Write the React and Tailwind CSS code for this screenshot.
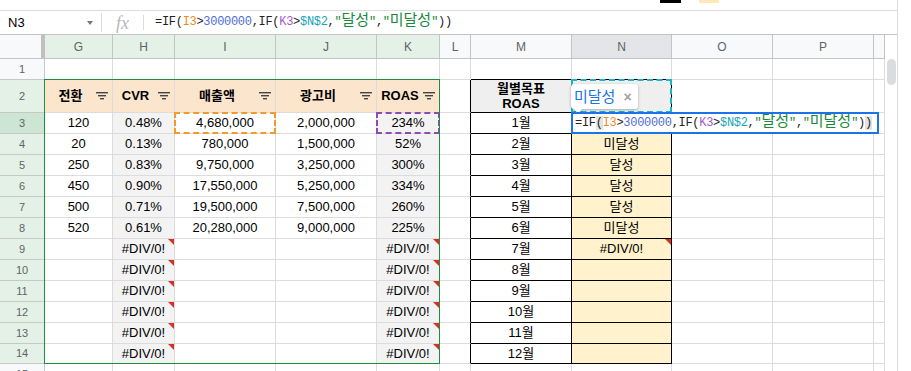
import React from "react";

const W = ["w-[45px]", "w-[68px]", "w-[62px]", "w-[101px]", "w-[101px]", "w-[63px]", "w-[31px]", "w-[101px]", "w-[100px]", "w-[101px]", "w-[101px]", "w-[11px]"];
const LETTERS = ["", "G", "H", "I", "J", "K", "L", "M", "N", "O", "P", ""];

const leftData = {
  3: ["120", "0.48%", "4,680,000", "2,000,000", "234%"],
  4: ["20", "0.13%", "780,000", "1,500,000", "52%"],
  5: ["250", "0.83%", "9,750,000", "3,250,000", "300%"],
  6: ["450", "0.90%", "17,550,000", "5,250,000", "334%"],
  7: ["500", "0.71%", "19,500,000", "7,500,000", "260%"],
  8: ["520", "0.61%", "20,280,000", "9,000,000", "225%"],
};

const nData = { 4: "미달성", 5: "달성", 6: "달성", 7: "달성", 8: "미달성", 9: "#DIV/0!" };

const GREEN = "text-[#188a3a]";

function Formula({ hl }) {
  const ko = "text-[15px] tracking-normal";
  const paren = hl ? "bg-[#e3e3e3]" : "";
  return (
    <span className="font-['Liberation_Mono','Noto_Sans_CJK_KR',monospace] text-[12px] tracking-[-0.3px] text-[#222] whitespace-nowrap">
      =IF<span className={paren}>(</span>
      <span className="text-[#f08a24]">I3</span>&gt;
      <span className="text-[#4f6bd6]">3000000</span>,IF(
      <span className="text-[#a35bc7]">K3</span>&gt;
      <span className="text-[#18a6b8]">$N$2</span>,
      <span className={GREEN}>"<span className={ko}>달성</span>"</span>,
      <span className={GREEN}>"<span className={ko}>미달성</span>"</span>)
      <span className={paren}>)</span>
    </span>
  );
}

function FilterIcon() {
  return (
    <svg width="12" height="8" viewBox="0 0 12 8" className="mr-[4px] shrink-0">
      <rect x="0" y="0" width="12" height="1.4" fill="#444" />
      <rect x="2" y="3" width="8" height="1.4" fill="#444" />
      <rect x="4" y="6" width="4" height="1.4" fill="#444" />
    </svg>
  );
}

function ErrMark() {
  return <span className="absolute top-0 right-0 w-0 h-0 border-l-[6px] border-l-transparent border-t-[6px] border-t-[#d93025]" />;
}

function rowHeight(r) {
  if (r === 2) return "h-[33px]";
  if (r === 14) return "h-[20px]";
  return "h-[21px]";
}

function Row({ r }) {
  const h = rowHeight(r);
  const inLeft = r >= 2 && r <= 14;
  const headBg = r === 3 ? "bg-[#cde5d3]" : inLeft ? "bg-[#e4f1e7]" : "bg-[#f8f9fa]";
  const cells = [];

  cells.push(
    <div key="rh" className={`${W[0]} ${h} ${headBg} shrink-0 border-r border-b border-[#c8c8c8] flex items-center justify-center text-[11px] text-[#5f6368]`}>
      {r}
    </div>
  );

  const heads = ["전환", "CVR", "매출액", "광고비", "ROAS"];
  for (let i = 0; i < 5; i++) {
    const c = i + 1;
    let bg = "bg-white";
    if (r === 2) bg = "bg-[#fce5cd]";
    else if (r >= 3 && r <= 14 && (i === 1 || i === 4)) bg = "bg-[#f3f3f3]";
    let content = null;
    let err = false;
    if (r === 2) {
      content = (
        <>
          <span className="flex-1 text-center font-bold">{heads[i]}</span>
          <FilterIcon />
        </>
      );
    } else if (leftData[r]) {
      content = <span className="flex-1 text-center">{leftData[r][i]}</span>;
    } else if (r >= 9 && r <= 14 && (i === 1 || i === 4)) {
      content = <span className="flex-1 text-center">#DIV/0!</span>;
      err = true;
    }
    let dash = null;
    if (r === 3 && i === 2) dash = <span className="absolute inset-[-1px] border-2 border-dashed border-[#f29b2b]" />;
    if (r === 3 && i === 4) dash = <span className="absolute inset-[-1px] border-2 border-dashed border-[#8e4bb4]" />;
    cells.push(
      <div key={c} className={`${W[c]} ${h} ${bg} relative shrink-0 border-r border-b border-[#dcdcdc] flex items-center`}>
        {content}
        {err && <ErrMark />}
        {dash}
      </div>
    );
  }

  // L
  cells.push(
    <div key="L" className={`${W[6]} ${h} shrink-0 border-r border-b border-b-[#dcdcdc] ${inLeft ? "border-r-black" : "border-r-[#dcdcdc]"}`} />
  );

  // M
  let mContent = null;
  let mBg = "bg-white";
  if (r === 2) {
    mBg = "bg-[#efefef]";
    mContent = (
      <span className="text-center font-bold leading-[15px]">
        월별목표
        <br />
        ROAS
      </span>
    );
  } else if (r >= 3 && r <= 14) {
    mContent = <span>{r - 2}월</span>;
  }
  const mBorder = r === 1 ? "border-r-[#dcdcdc] border-b-black" : inLeft ? "border-r-black border-b-black" : "border-r-[#dcdcdc] border-b-[#dcdcdc]";
  cells.push(
    <div key="M" className={`${W[7]} ${h} ${mBg} shrink-0 border-r border-b ${mBorder} flex items-center justify-center`}>
      {mContent}
    </div>
  );

  // N
  let nBg = "bg-white";
  if (r === 2) nBg = "bg-[#efefef]";
  else if (r >= 3 && r <= 14) nBg = "bg-[#fff2cc]";
  cells.push(
    <div key="N" className={`${W[8]} ${h} ${nBg} relative shrink-0 border-r border-b ${mBorder} flex items-center justify-center`}>
      {nData[r] && <span>{nData[r]}</span>}
      {r === 9 && <ErrMark />}
      {r === 2 && <span className="absolute inset-[-1px] border-2 border-dashed border-[#1fb3c6]" />}
      {r === 3 && (
        <>
          <div className="absolute left-[-1px] bottom-[24px] w-[67px] h-[25px] bg-white rounded-[3px] shadow-[0_1px_3px_rgba(0,0,0,0.3)] flex items-center pl-[3px] z-10">
            <span className="text-[15px] text-[#1a73e8] leading-none">미달성</span>
            <span className="ml-[8px] text-[14px] font-bold text-[#a0a4a8] leading-none">×</span>
            <span className="absolute left-[4px] bottom-[-3px] w-[6px] h-[6px] bg-white rotate-45 shadow-[1px_1px_1px_rgba(0,0,0,0.2)]" />
          </div>
          <div className="absolute left-[-1px] top-[-1px] w-[308px] h-[22px] border-2 border-[#1a73e8] bg-white flex items-center pl-[2px] z-10">
            <Formula hl />
          </div>
        </>
      )}
    </div>
  );

  for (let c = 9; c <= 11; c++) {
    cells.push(<div key={c} className={`${W[c]} ${h} shrink-0 border-r border-b border-[#dcdcdc]`} />);
  }

  return <div className="flex">{cells}</div>;
}

export default function App() {
  const rows = [];
  for (let r = 1; r <= 15; r++) rows.push(<Row key={r} r={r} />);

  return (
    <div className="w-[911px] h-[371px] overflow-hidden bg-white flex font-['Liberation_Sans','Noto_Sans_CJK_KR',sans-serif] text-[13px] text-black">
      <div className="w-[898px] shrink-0 border-r border-[#dadce0] flex flex-col">
        {/* bit of toolbar */}
        <div className="h-[11px] border-b border-[#dadce0] flex items-start shrink-0">
          <div className="ml-[660px] w-[21px] h-[3px] bg-black" />
          <div className="ml-[18px] w-[20px] h-[3px] bg-[#fde8b6]" />
        </div>

        {/* formula bar */}
        <div className="h-[24px] border-b border-[#c4c4c4] flex items-center shrink-0">
          <div className="w-[101px] flex items-center pl-[8px]">
            <span className="flex-1 text-[13px]">N3</span>
            <span className="mr-[8px] w-0 h-0 border-l-[3px] border-r-[3px] border-l-transparent border-r-transparent border-t-[4px] border-t-[#777]" />
          </div>
          <div className="h-[19px] border-l border-[#dadce0]" />
          <div className="w-[41px] flex justify-center">
            <span className="font-['Liberation_Serif',serif] italic text-[18px] text-[#b5b8bc] leading-none">fx</span>
          </div>
          <div className="h-[15px] border-l border-[#dadce0]" />
          <div className="pl-[11px]">
            <Formula />
          </div>
        </div>

        {/* sheet */}
        <div className="flex">
          <div className="relative w-[885px] shrink-0">
            <div className="flex">
              {LETTERS.map((l, i) => {
                let bg = "bg-[#f8f9fa]";
                if (i >= 1 && i <= 5) bg = "bg-[#e4f1e7]";
                if (i === 8) bg = "bg-[#e3e5e8]";
                if (i === 0)
                  return <div key={i} className={`${W[0]} h-[24px] shrink-0 bg-[#f8f9fa] border-r-4 border-b border-r-[#c0c0c0] border-b-[#c4c4c4]`} />;
                return (
                  <div key={i} className={`${W[i]} h-[24px] ${bg} shrink-0 border-r border-b border-[#c4c4c4] flex items-center justify-center text-[12px] text-[#5f6368]`}>
                    {l}
                  </div>
                );
              })}
            </div>
            {rows}
            {/* selected range G2:K14 */}
            <div className="absolute left-[44px] top-[44px] w-[396px] h-[285px] border border-[#1e8e3e] pointer-events-none" />
          </div>
          <div className="w-[12px] shrink-0 bg-white">
            <div className="mt-[24px] mx-auto w-[9px] h-[26px] rounded-full bg-[#dadce0]" />
          </div>
        </div>
      </div>
      <div className="flex-1 bg-white" />
    </div>
  );
}
